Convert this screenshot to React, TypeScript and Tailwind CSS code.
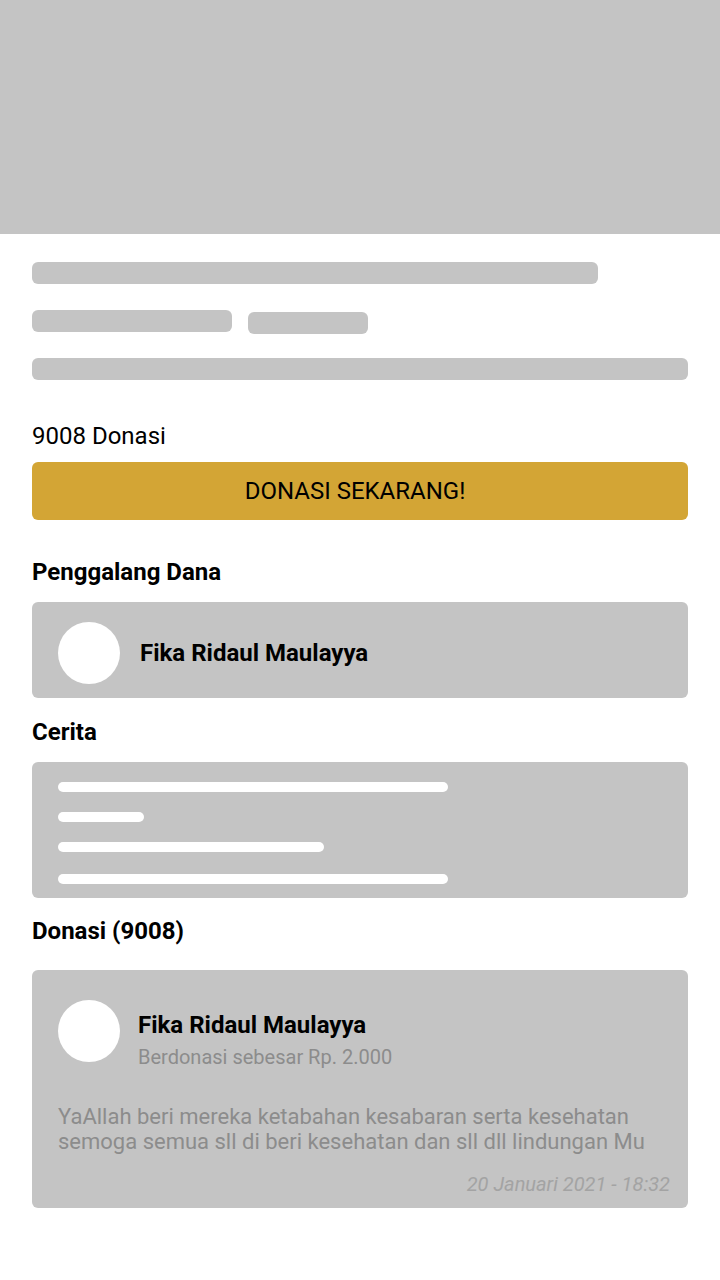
import React from 'react'

export default function App() {
  return (
    <div className="w-[720px] min-h-[1280px] bg-white text-black font-['Roboto',sans-serif]">
      <div className="h-[234px] bg-[#c4c4c4]" />
      <div className="px-8 pt-7">
        <div className="h-[22px] w-[566px] rounded-md bg-[#c4c4c4]" />
        <div className="mt-[26px] flex gap-4">
          <div className="h-[22px] w-[200px] rounded-md bg-[#c4c4c4]" />
          <div className="mt-[2px] h-[22px] w-[120px] rounded-md bg-[#c4c4c4]" />
        </div>
        <div className="mt-6 h-[22px] w-full rounded-md bg-[#c4c4c4]" />

        <div className="mt-[39px] text-2xl leading-[34px]">9008 Donasi</div>
        <button className="mt-[9px] flex h-[58px] w-full items-center justify-center rounded-md bg-[#d3a535] pr-[10px] text-2xl">
          DONASI SEKARANG!
        </button>

        <h2 className="mt-[37px] text-2xl font-bold leading-[30px]">Penggalang Dana</h2>
        <div className="mt-[15px] flex h-[96px] items-start rounded-md bg-[#c4c4c4] px-[26px] pt-5">
          <div className="h-[62px] w-[62px] rounded-full bg-white" />
          <div className="ml-5 text-2xl font-bold leading-[62px]">Fika Ridaul Maulayya</div>
        </div>

        <h2 className="mt-[19px] text-2xl font-bold leading-[30px]">Cerita</h2>
        <div className="mt-[15px] flex h-[136px] flex-col gap-5 rounded-md bg-[#c4c4c4] px-[26px] pt-5">
          <div className="h-[10px] w-[390px] rounded-full bg-white" />
          <div className="h-[10px] w-[86px] rounded-full bg-white" />
          <div className="h-[10px] w-[266px] rounded-full bg-white" />
          <div className="mt-[2px] h-[10px] w-[390px] rounded-full bg-white" />
        </div>

        <h2 className="mt-[18px] text-2xl font-bold leading-[30px]">Donasi (9008)</h2>
        <div className="mt-[24px] rounded-md bg-[#c4c4c4] px-[26px] pb-[10px] pt-[30px]">
          <div className="flex items-start">
            <div className="h-[62px] w-[62px] shrink-0 rounded-full bg-white" />
            <div className="ml-[18px] pt-[10px]">
              <div className="text-2xl font-bold leading-[30px]">Fika Ridaul Maulayya</div>
              <div className="mt-[3px] text-xl leading-[28px] text-[#8c8c8c]">Berdonasi sebesar Rp. 2.000</div>
            </div>
          </div>
          <p className="mt-[33px] text-[22px] leading-[25px] text-[#8c8c8c]">
            YaAllah beri mereka ketabahan kesabaran serta kesehatan semoga semua sll di beri kesehatan dan sll dll lindungan Mu
          </p>
          <div className="-mr-2 mt-[16px] text-right text-xl italic leading-[28px] text-[#a3a3a3]">
            20 Januari 2021 - 18:32
          </div>
        </div>
      </div>
    </div>
  )
}
